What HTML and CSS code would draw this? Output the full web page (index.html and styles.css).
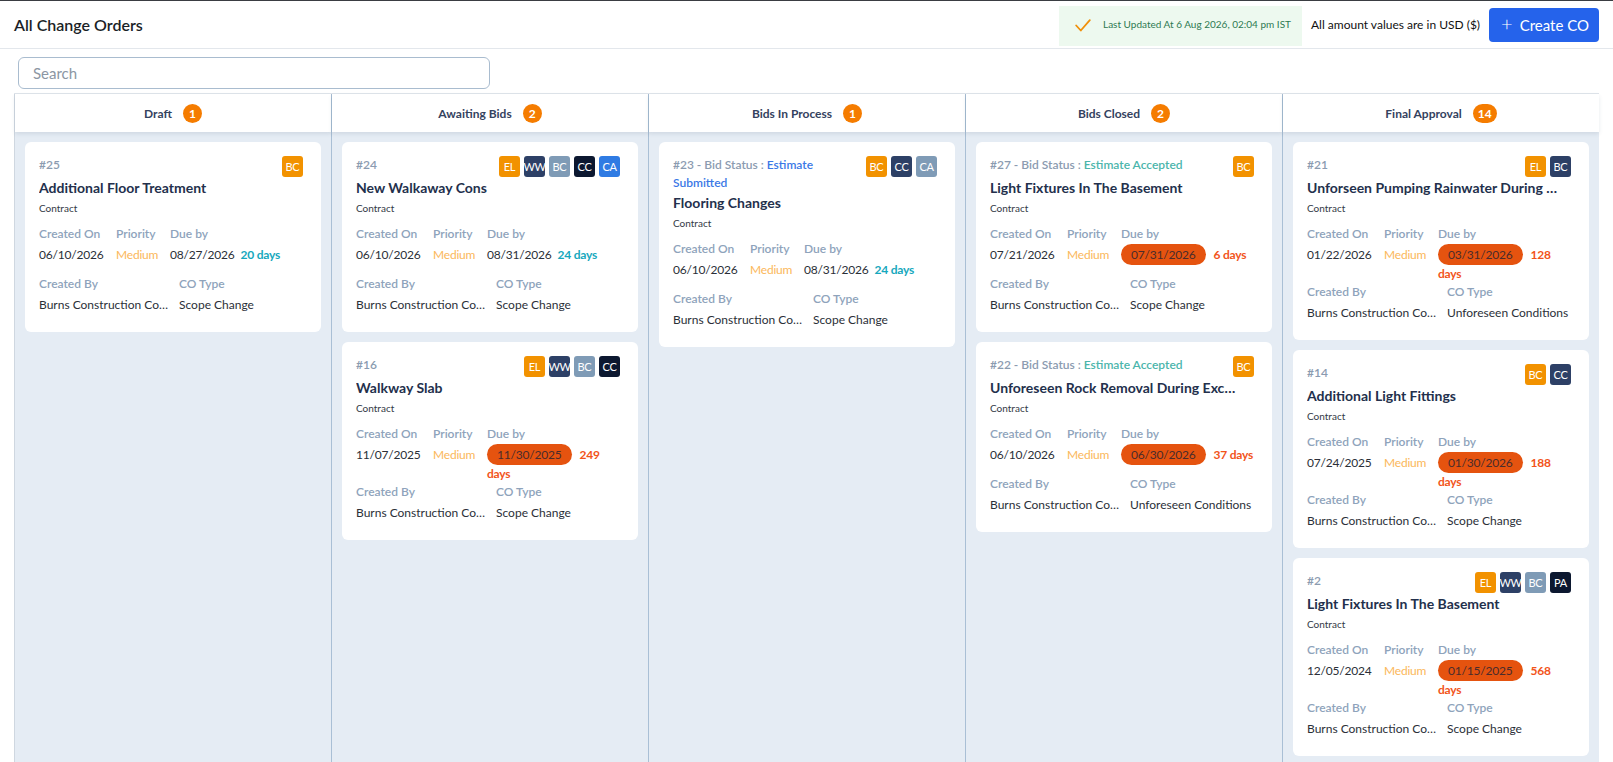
FILE: index.html
```html
<!DOCTYPE html>
<html lang="en">
<head>
    <meta charset="UTF-8">
    <meta name="viewport" content="width=device-width, initial-scale=1.0">
    <title>All Change Orders</title>
    <link rel="stylesheet" href="styles.css">
</head>
<body>
    <header class="topbar">
        <h1 class="page-title">All Change Orders</h1>
        <div class="topbar-right">
            <div class="updated">
                <svg class="check" width="16" height="13" viewBox="0 0 16 13"><polyline points="1.2,6.5 5.8,11.5 14.8,1.2" fill="none" stroke="#f0900a" stroke-width="1.8" stroke-linecap="round" stroke-linejoin="round"/></svg>
                <span>Last Updated At 6 Aug 2026, 02:04 pm IST</span>
            </div>
            <span class="currency">All amount values are in USD ($)</span>
            <button class="create-btn"><span class="plus">+</span> Create CO</button>
        </div>
    </header>

    <div class="search-row">
        <input class="search" type="text" placeholder="Search">
    </div>

    <div class="board">
        <!-- Draft -->
        <div class="column">
            <div class="column-head">Draft <span class="count">1</span></div>
            <div class="column-body">
                <div class="card">
                    <div class="card-head">
                        <div class="co-id">#25</div>
                        <div class="avatars"><span class="av c1">BC</span></div>
                    </div>
                    <div class="card-title">Additional Floor Treatment</div>
                    <div class="card-sub">Contract</div>
                    <div class="meta-row">
                        <div class="cell"><div class="lbl">Created On</div><div class="val">06/10/2026</div></div>
                        <div class="cell"><div class="lbl">Priority</div><div class="val medium">Medium</div></div>
                        <div class="cell due"><div class="lbl">Due by</div><div class="val">08/27/2026 <span class="days">20 days</span></div></div>
                    </div>
                    <div class="meta-row two">
                        <div class="cell"><div class="lbl">Created By</div><div class="val clip">Burns Construction Company</div></div>
                        <div class="cell"><div class="lbl">CO Type</div><div class="val clip">Scope Change</div></div>
                    </div>
                </div>
            </div>
        </div>

        <!-- Awaiting Bids -->
        <div class="column">
            <div class="column-head">Awaiting Bids <span class="count">2</span></div>
            <div class="column-body">
                <div class="card">
                    <div class="card-head">
                        <div class="co-id">#24</div>
                        <div class="avatars"><span class="av c1">EL</span><span class="av c2">WW</span><span class="av c3">BC</span><span class="av c4">CC</span><span class="av c5">CA</span></div>
                    </div>
                    <div class="card-title">New Walkaway Cons</div>
                    <div class="card-sub">Contract</div>
                    <div class="meta-row">
                        <div class="cell"><div class="lbl">Created On</div><div class="val">06/10/2026</div></div>
                        <div class="cell"><div class="lbl">Priority</div><div class="val medium">Medium</div></div>
                        <div class="cell due"><div class="lbl">Due by</div><div class="val">08/31/2026 <span class="days">24 days</span></div></div>
                    </div>
                    <div class="meta-row two">
                        <div class="cell"><div class="lbl">Created By</div><div class="val clip">Burns Construction Company</div></div>
                        <div class="cell"><div class="lbl">CO Type</div><div class="val clip">Scope Change</div></div>
                    </div>
                </div>
                <div class="card">
                    <div class="card-head">
                        <div class="co-id">#16</div>
                        <div class="avatars"><span class="av c1">EL</span><span class="av c2">WW</span><span class="av c3">BC</span><span class="av c4">CC</span></div>
                    </div>
                    <div class="card-title">Walkway Slab</div>
                    <div class="card-sub">Contract</div>
                    <div class="meta-row">
                        <div class="cell"><div class="lbl">Created On</div><div class="val">11/07/2025</div></div>
                        <div class="cell"><div class="lbl">Priority</div><div class="val medium">Medium</div></div>
                        <div class="cell due"><div class="lbl">Due by</div><div class="val"><span class="overdue">11/30/2025</span> <span class="late">249 days</span></div></div>
                    </div>
                    <div class="meta-row two">
                        <div class="cell"><div class="lbl">Created By</div><div class="val clip">Burns Construction Company</div></div>
                        <div class="cell"><div class="lbl">CO Type</div><div class="val clip">Scope Change</div></div>
                    </div>
                </div>
            </div>
        </div>

        <!-- Bids In Process -->
        <div class="column">
            <div class="column-head">Bids In Process <span class="count">1</span></div>
            <div class="column-body">
                <div class="card">
                    <div class="card-head">
                        <div class="co-id">#23 - Bid Status : <span class="st-submitted">Estimate Submitted</span></div>
                        <div class="avatars"><span class="av c1">BC</span><span class="av c2">CC</span><span class="av c3">CA</span></div>
                    </div>
                    <div class="card-title">Flooring Changes</div>
                    <div class="card-sub">Contract</div>
                    <div class="meta-row">
                        <div class="cell"><div class="lbl">Created On</div><div class="val">06/10/2026</div></div>
                        <div class="cell"><div class="lbl">Priority</div><div class="val medium">Medium</div></div>
                        <div class="cell due"><div class="lbl">Due by</div><div class="val">08/31/2026 <span class="days">24 days</span></div></div>
                    </div>
                    <div class="meta-row two">
                        <div class="cell"><div class="lbl">Created By</div><div class="val clip">Burns Construction Company</div></div>
                        <div class="cell"><div class="lbl">CO Type</div><div class="val clip">Scope Change</div></div>
                    </div>
                </div>
            </div>
        </div>

        <!-- Bids Closed -->
        <div class="column">
            <div class="column-head">Bids Closed <span class="count">2</span></div>
            <div class="column-body">
                <div class="card">
                    <div class="card-head">
                        <div class="co-id">#27 - Bid Status : <span class="st-accepted">Estimate Accepted</span></div>
                        <div class="avatars"><span class="av c1">BC</span></div>
                    </div>
                    <div class="card-title">Light Fixtures In The Basement</div>
                    <div class="card-sub">Contract</div>
                    <div class="meta-row">
                        <div class="cell"><div class="lbl">Created On</div><div class="val">07/21/2026</div></div>
                        <div class="cell"><div class="lbl">Priority</div><div class="val medium">Medium</div></div>
                        <div class="cell due"><div class="lbl">Due by</div><div class="val"><span class="overdue">07/31/2026</span> <span class="late">6 days</span></div></div>
                    </div>
                    <div class="meta-row two">
                        <div class="cell"><div class="lbl">Created By</div><div class="val clip">Burns Construction Company</div></div>
                        <div class="cell"><div class="lbl">CO Type</div><div class="val clip">Scope Change</div></div>
                    </div>
                </div>
                <div class="card">
                    <div class="card-head">
                        <div class="co-id">#22 - Bid Status : <span class="st-accepted">Estimate Accepted</span></div>
                        <div class="avatars"><span class="av c1">BC</span></div>
                    </div>
                    <div class="card-title">Unforeseen Rock Removal During Excavation</div>
                    <div class="card-sub">Contract</div>
                    <div class="meta-row">
                        <div class="cell"><div class="lbl">Created On</div><div class="val">06/10/2026</div></div>
                        <div class="cell"><div class="lbl">Priority</div><div class="val medium">Medium</div></div>
                        <div class="cell due"><div class="lbl">Due by</div><div class="val"><span class="overdue">06/30/2026</span> <span class="late">37 days</span></div></div>
                    </div>
                    <div class="meta-row two">
                        <div class="cell"><div class="lbl">Created By</div><div class="val clip">Burns Construction Company</div></div>
                        <div class="cell"><div class="lbl">CO Type</div><div class="val clip">Unforeseen Conditions</div></div>
                    </div>
                </div>
            </div>
        </div>

        <!-- Final Approval -->
        <div class="column">
            <div class="column-head">Final Approval <span class="count">14</span></div>
            <div class="column-body">
                <div class="card">
                    <div class="card-head">
                        <div class="co-id">#21</div>
                        <div class="avatars"><span class="av c1">EL</span><span class="av c2">BC</span></div>
                    </div>
                    <div class="card-title">Unforseen Pumping Rainwater During Excavation</div>
                    <div class="card-sub">Contract</div>
                    <div class="meta-row">
                        <div class="cell"><div class="lbl">Created On</div><div class="val">01/22/2026</div></div>
                        <div class="cell"><div class="lbl">Priority</div><div class="val medium">Medium</div></div>
                        <div class="cell due"><div class="lbl">Due by</div><div class="val"><span class="overdue">03/31/2026</span> <span class="late">128 days</span></div></div>
                    </div>
                    <div class="meta-row two">
                        <div class="cell"><div class="lbl">Created By</div><div class="val clip">Burns Construction Company</div></div>
                        <div class="cell"><div class="lbl">CO Type</div><div class="val clip">Unforeseen Conditions</div></div>
                    </div>
                </div>
                <div class="card">
                    <div class="card-head">
                        <div class="co-id">#14</div>
                        <div class="avatars"><span class="av c1">BC</span><span class="av c2">CC</span></div>
                    </div>
                    <div class="card-title">Additional Light Fittings</div>
                    <div class="card-sub">Contract</div>
                    <div class="meta-row">
                        <div class="cell"><div class="lbl">Created On</div><div class="val">07/24/2025</div></div>
                        <div class="cell"><div class="lbl">Priority</div><div class="val medium">Medium</div></div>
                        <div class="cell due"><div class="lbl">Due by</div><div class="val"><span class="overdue">01/30/2026</span> <span class="late">188 days</span></div></div>
                    </div>
                    <div class="meta-row two">
                        <div class="cell"><div class="lbl">Created By</div><div class="val clip">Burns Construction Company</div></div>
                        <div class="cell"><div class="lbl">CO Type</div><div class="val clip">Scope Change</div></div>
                    </div>
                </div>
                <div class="card">
                    <div class="card-head">
                        <div class="co-id">#2</div>
                        <div class="avatars"><span class="av c1">EL</span><span class="av c2">WW</span><span class="av c3">BC</span><span class="av c4">PA</span></div>
                    </div>
                    <div class="card-title">Light Fixtures In The Basement</div>
                    <div class="card-sub">Contract</div>
                    <div class="meta-row">
                        <div class="cell"><div class="lbl">Created On</div><div class="val">12/05/2024</div></div>
                        <div class="cell"><div class="lbl">Priority</div><div class="val medium">Medium</div></div>
                        <div class="cell due"><div class="lbl">Due by</div><div class="val"><span class="overdue">01/15/2025</span> <span class="late">568 days</span></div></div>
                    </div>
                    <div class="meta-row two">
                        <div class="cell"><div class="lbl">Created By</div><div class="val clip">Burns Construction Company</div></div>
                        <div class="cell"><div class="lbl">CO Type</div><div class="val clip">Scope Change</div></div>
                    </div>
                </div>
            </div>
        </div>
    </div>
</body>
</html>
```

FILE: styles.css
```css
* {
    box-sizing: border-box;
}

html, body {
    height: 100%;
}

body {
    margin: 0;
    font-family: Lato, "Open Sans", Arial, sans-serif;
    color: #2b2f38;
    background: #fff;
    border-top: 1px solid #3a3d42;
    display: flex;
    flex-direction: column;
    overflow: hidden;
}

/* top bar */
.topbar {
    height: 48px;
    display: flex;
    align-items: center;
    justify-content: space-between;
    padding: 0 14px;
    border-bottom: 1px solid #e3e7ec;
    flex-shrink: 0;
}

.page-title {
    margin: 0;
    font-size: 16px;
    font-weight: 600;
    color: #1b1f27;
}

.topbar-right {
    display: flex;
    align-items: center;
    height: 100%;
}

.updated {
    display: flex;
    align-items: center;
    gap: 12px;
    height: 40px;
    margin-top: 2px;
    padding: 0 11px 0 16px;
    background: #edf9ef;
    font-size: 10px;
    color: #2e7a52;
    white-space: nowrap;
}

.updated span {
    margin-top: -4px;
}

.check {
    flex-shrink: 0;
}

.currency {
    margin-left: 9px;
    font-size: 12px;
    color: #111;
    white-space: nowrap;
}

.create-btn {
    flex-shrink: 0;
    margin-left: 9px;
    height: 34px;
    padding: 0 10px 0 12px;
    border: none;
    border-radius: 4px;
    background: #2563eb;
    color: #fff;
    font-family: inherit;
    font-size: 15px;
    display: flex;
    align-items: center;
    gap: 7px;
    white-space: nowrap;
}

.plus {
    font-size: 20px;
    font-weight: 300;
    line-height: 1;
    margin-top: -3px;
}

/* search */
.search-row {
    padding: 8px 0 4px 18px;
    flex-shrink: 0;
}

.search {
    width: 472px;
    height: 32px;
    border: 1px solid #a9bccf;
    border-radius: 6px;
    padding: 0 14px;
    font-family: inherit;
    font-size: 15px;
    color: #333;
    outline: none;
}

.search::placeholder {
    color: #8c96a3;
}

/* board */
.board {
    flex: 1;
    display: grid;
    grid-template-columns: repeat(5, 1fr);
    margin: 0 14px;
    border-top: 1px solid #dfe4ea;
    min-height: 0;
}

.column {
    display: flex;
    flex-direction: column;
    border-left: 1px solid #a9bfd5;
    background: #e5ecf4;
    min-width: 0;
}

.column:first-child {
    border-left-color: #cfd7e0;
}

.column-head {
    height: 38px;
    flex-shrink: 0;
    display: flex;
    align-items: center;
    justify-content: center;
    gap: 11px;
    background: #fff;
    font-size: 12px;
    font-weight: 700;
    color: #34425e;
    box-shadow: 0 2px 4px rgba(60, 80, 110, 0.12);
    position: relative;
    z-index: 1;
}

.count {
    min-width: 19px;
    height: 19px;
    padding: 0 5px;
    border-radius: 10px;
    background: #f57c00;
    color: #fff;
    font-size: 12px;
    font-weight: 700;
    display: inline-flex;
    align-items: center;
    justify-content: center;
}

.column-body {
    padding: 10px;
    display: flex;
    flex-direction: column;
    gap: 10px;
}

/* cards */
.card {
    background: #fff;
    border-radius: 6px;
    padding: 14px 14px 18px 14px;
}

.card-head {
    display: flex;
    justify-content: space-between;
    align-items: flex-start;
    gap: 8px;
    margin-bottom: 1px;
}

.co-id {
    font-size: 12px;
    line-height: 18px;
    font-weight: 600;
    color: #8b9bb0;
}

.st-submitted {
    color: #3a78e6;
}

.st-accepted {
    color: #4bb5ab;
}

.avatars {
    display: flex;
    gap: 4px;
    flex-shrink: 0;
    margin-right: 4px;
}

.av {
    width: 21px;
    height: 21px;
    border-radius: 3px;
    display: flex;
    align-items: center;
    justify-content: center;
    font-size: 11px;
    color: #fff;
    letter-spacing: -0.3px;
    overflow: hidden;
}

.c1 { background: #f29200; }
.c2 { background: #2d4066; }
.c3 { background: #7f9bb6; }
.c4 { background: #0c1830; }
.c5 { background: #2f7be3; }

.card-title {
    padding-right: 16px;
    font-size: 14px;
    line-height: 20px;
    font-weight: 700;
    color: #23304c;
    white-space: nowrap;
    overflow: hidden;
    text-overflow: ellipsis;
}

.card-sub {
    margin-top: 3px;
    font-size: 10px;
    line-height: 14px;
    color: #333a45;
}

.meta-row {
    margin-top: 10px;
    display: grid;
    grid-template-columns: 77px 54px 1fr;
    min-height: 50px;
}

.meta-row.two {
    margin-top: 0;
    grid-template-columns: 130px 1fr;
    column-gap: 10px;
    min-height: 0;
}

.cell {
    min-width: 0;
}

.cell.due {
    padding-right: 2px;
}

.lbl {
    font-size: 12px;
    line-height: 18px;
    font-weight: 600;
    color: #8ea3bb;
    white-space: nowrap;
}

.val {
    margin-top: 2px;
    font-size: 12px;
    line-height: 19px;
    color: #2b2f38;
}

.meta-row:not(.two) .val {
    letter-spacing: -0.2px;
}

.val.clip {
    white-space: nowrap;
    overflow: hidden;
    text-overflow: ellipsis;
}

.medium {
    color: #fbb75a;
}

.days {
    margin-left: 3px;
    font-weight: 700;
    color: #16a8bd;
}

.overdue {
    padding: 3px 10px;
    border-radius: 11px;
    background: #e5530f;
    color: #4a2c2c;
    margin-right: 5px;
}

.late {
    font-weight: 700;
    color: #f2541a;
}
```
